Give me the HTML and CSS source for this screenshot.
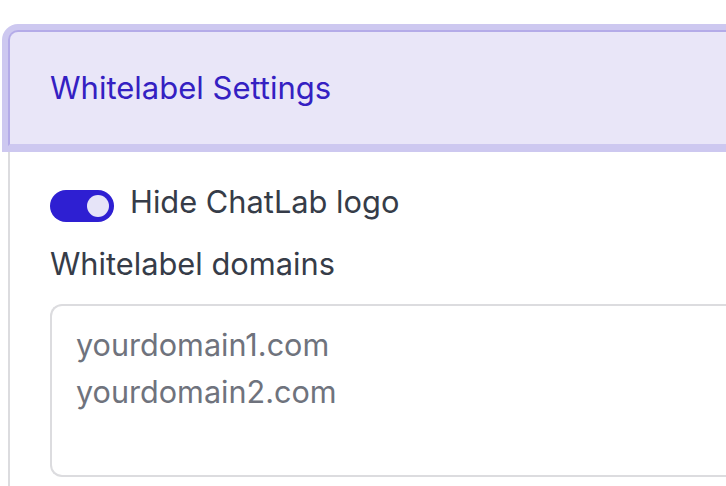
FILE: index.html
```html
<!DOCTYPE html>
<html>
<head>
<meta charset="utf-8">
<link rel="stylesheet" href="styles.css">
</head>
<body>
<div class="card">
  <div class="card-header">
    <h2 class="title">Whitelabel Settings</h2>
  </div>
  <div class="card-body">
    <label class="toggle-row">
      <span class="toggle"><span class="knob"></span></span>
      <span class="toggle-label">Hide ChatLab logo</span>
    </label>
    <div class="field-label">Whitelabel domains</div>
    <textarea class="domains" placeholder="yourdomain1.com&#10;yourdomain2.com"></textarea>
  </div>
</div>
</body>
</html>
```
FILE: styles.css
```css
html, body {
  margin: 0;
  padding: 0;
  background: #ffffff;
  overflow: hidden;
}
body {
  font-family: Inter, "Noto Sans", sans-serif;
  width: 726px;
  height: 486px;
}
.card {
  margin: 30px 0 0 8px;
  border-left: 2px solid #dcdcdf;
  border-radius: 10px 0 0 0;
}
.card-header {
  background: #e9e6f8;
  border-top: 2px solid #b4abe8;
  border-left: 2px solid #b4abe8;
  border-bottom: 2px solid #cdc8f0;
  margin-left: -2px;
  border-radius: 10px 0 0 0;
  box-shadow: 0 0 0 6px #cdc8f0;
  padding: 32px 40px;
}
.title {
  margin: 0;
  font-size: 31px;
  line-height: 48px;
  font-weight: 400;
  color: #3420c2;
}
.card-body {
  padding: 32px 0 24px 40px;
}
.toggle-row {
  display: flex;
  align-items: center;
  gap: 16px;
  height: 48px;
}
.toggle {
  width: 64px;
  height: 32px;
  border-radius: 16px;
  background: #2e1fd2;
  display: flex;
  align-items: center;
  justify-content: flex-end;
  padding-right: 5px;
  box-sizing: border-box;
  margin-top: 8px;
}
.knob {
  width: 22px;
  height: 22px;
  border-radius: 50%;
  background: #e6e4f8;
}
.toggle-label {
  font-size: 30.8px;
  line-height: 48px;
  color: #363c48;
}
.field-label {
  margin-top: 14px;
  font-size: 30.8px;
  line-height: 48px;
  color: #363c48;
}
.domains {
  display: block;
  margin-top: 16px;
  width: 100%;
  height: 173px;
  box-sizing: border-box;
  border: 2px solid #dcdcdf;
  border-right: none;
  border-radius: 12px 0 0 12px;
  padding: 15px 24px;
  font-family: Inter, "Noto Sans", sans-serif;
  font-size: 30.6px;
  line-height: 47px;
  color: #363c48;
  resize: none;
  outline: none;
}
.domains::placeholder {
  color: #6f737d;
}
```
